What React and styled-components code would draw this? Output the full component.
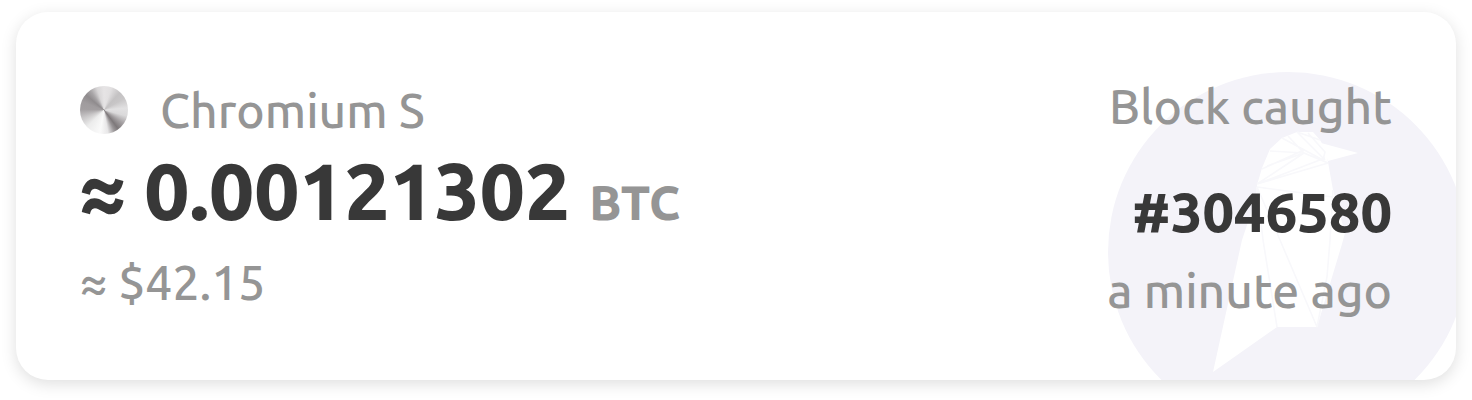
import React from "react";
import styled, { createGlobalStyle } from "styled-components";

const GlobalStyle = createGlobalStyle`
  *, *::before, *::after { box-sizing: border-box; }
  body {
    margin: 0;
    background: #ffffff;
    font-family: Ubuntu, "Noto Sans", "Open Sans", sans-serif;
  }
`;

const Page = styled.main`
  padding: 12px 16px 20px;
`;

const Card = styled.article`
  position: relative;
  display: flex;
  align-items: center;
  justify-content: space-between;
  padding: 62px 64px;
  border-radius: 32px;
  background: #ffffff;
  box-shadow: 0 4px 16px rgba(0, 0, 0, 0.13);
  overflow: hidden;
`;

const Watermark = styled.svg`
  position: absolute;
  right: -12px;
  bottom: -52px;
  width: 360px;
  height: 360px;
`;

const Column = styled.div`
  position: relative;
  display: flex;
  flex-direction: column;
  align-items: ${({ $end }) => ($end ? "flex-end" : "flex-start")};
  padding-top: ${({ $end }) => ($end ? "4px" : "0")};
  white-space: nowrap;
`;

const Label = styled.span`
  font-size: 48px;
  line-height: 56px;
  font-weight: 500;
  color: #959595;
`;

const League = styled.div`
  display: flex;
  align-items: center;
  gap: 32px;
`;

const LeagueBadge = styled.span`
  width: 48px;
  height: 48px;
  border-radius: 50%;
  background: conic-gradient(
    #e6e4e5 0deg,
    #e2e0e1 18deg,
    #c4c2c3 42deg,
    #c8c6c7 60deg,
    #e2e1e2 85deg,
    #dad9da 105deg,
    #a5a1a3 125deg,
    #7d787a 143deg,
    #989496 153deg,
    #e8e7e8 170deg,
    #fafafa 190deg,
    #ececec 225deg,
    #c9c7c8 250deg,
    #a39fa1 272deg,
    #a09c9e 290deg,
    #8f8b8d 310deg,
    #a8a5a7 325deg,
    #d8d6d7 342deg,
    #e6e4e5 360deg
  );
`;

const Amount = styled.strong`
  margin: 4px 0 16px;
  font-size: 80px;
  line-height: 96px;
  font-weight: 800;
  color: #383838;
`;

const Currency = styled.span`
  font-size: 48px;
  line-height: 48px;
  color: #959595;
`;

const BlockNumber = styled.strong`
  margin: 46px 0 18px;
  font-size: 56px;
  line-height: 64px;
  font-weight: 800;
  color: #383838;
`;

function BirdMark() {
  return (
    <Watermark viewBox="0 0 360 360" aria-hidden="true">
      <circle cx="180" cy="180" r="180" fill="#f4f3f9" />
      <g fill="#ffffff">
        <path d="M213 71 L250 81 L220 89 Z" />
        <path d="M149 113 L154 96 L162 77 L174 66 L189 60 H205 L212 68 L218 78 L220 90 L225 118 L237 161 L234 172 L209 255 H169 L105 300 L134 168 L148 126 Z" />
      </g>
      <g fill="none" stroke="#f8f8fb" strokeWidth="1.6">
        <path d="M149 112 L220 91 M149 112 L196 81 L159 94 M149 112 L217 86 M154 97 L196 78 M162 79 L196 81 M174 66 L215 88 M180 64 L196 81 L220 91 M189 60 L217 88 M200 61 L217 80 L215 88 M189 60 L212 68" />
        <path d="M149 115 L225 125 M149 115 L155 168 L169 255 M149 115 L172 168 L209 255 M225 118 L222 168 L219 205 L209 255" />
      </g>
    </Watermark>
  );
}

export default function App() {
  return (
    <>
      <GlobalStyle />
      <Page>
        <Card>
          <BirdMark />
          <Column>
            <League>
              <LeagueBadge />
              <Label>Chromium S</Label>
            </League>
            <Amount>
              ≈ 0.00121302 <Currency>BTC</Currency>
            </Amount>
            <Label>≈ $42.15</Label>
          </Column>
          <Column $end>
            <Label>Block caught</Label>
            <BlockNumber>#3046580</BlockNumber>
            <Label>a minute ago</Label>
          </Column>
        </Card>
      </Page>
    </>
  );
}
